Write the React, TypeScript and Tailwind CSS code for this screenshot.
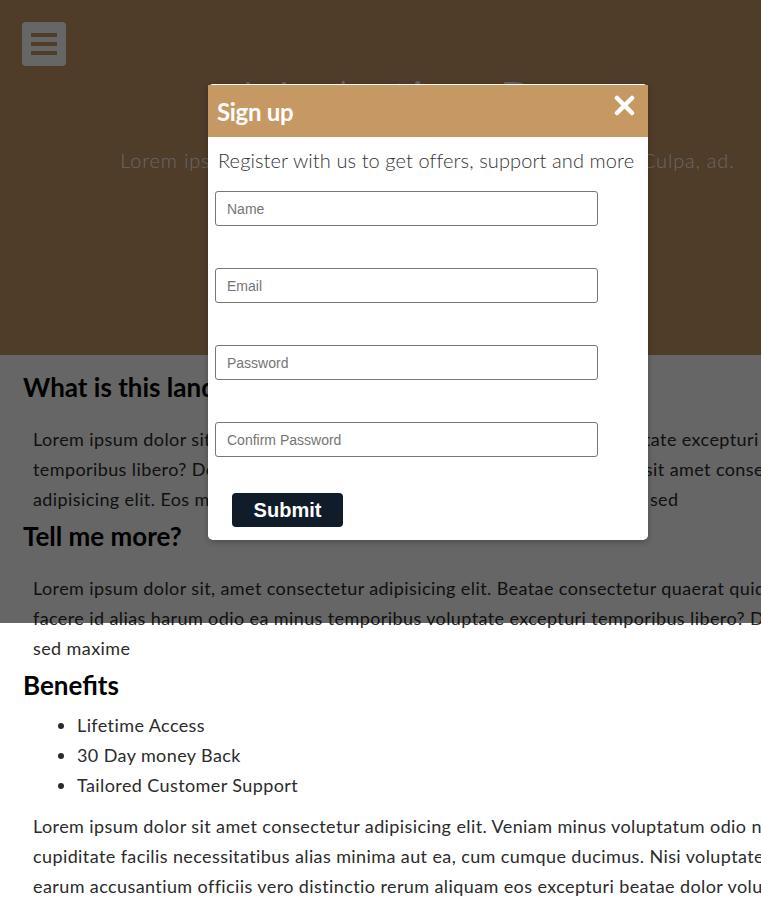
import React from 'react';

const fields = ['Name', 'Email', 'Password', 'Confirm Password'];

function Hamburger() {
  return (
    <button className="absolute left-[22px] top-[22px] flex h-[44px] w-[44px] flex-col items-center justify-center gap-[5px] rounded-[4px] bg-white">
      <span className="h-[4px] w-[26px] bg-[#c59666]" />
      <span className="h-[4px] w-[26px] bg-[#c59666]" />
      <span className="h-[4px] w-[26px] bg-[#c59666]" />
    </button>
  );
}

function SignupModal() {
  return (
    <div className="absolute left-[208px] top-[84px] flex h-[456px] w-[440px] flex-col rounded-[5px] bg-white pt-px shadow-[0_2px_6px_rgba(0,0,0,0.25)]">
      <div className="flex h-[52px] justify-between bg-[#c69863] pl-[9px] pr-[13px]">
        <span className="self-center pt-[2px] text-[24px] font-bold tracking-[-0.3px] text-white">Sign up</span>
        <svg className="mt-[10px]" width="21" height="21" viewBox="0 0 21 21">
          <path d="M3 3 L18 18 M18 3 L3 18" stroke="#fff" strokeWidth="4.5" strokeLinecap="round" />
        </svg>
      </div>
      <p className="mt-[9px] pl-[10px] text-[20px] font-light leading-[28px] tracking-[0.1px] text-[#333]">
        Register with us to get offers, support and more
      </p>
      <form className="mt-[17px] flex flex-col gap-[42px] pl-[7px]">
        {fields.map((f) => (
          <input
            key={f}
            placeholder={f}
            className="h-[35px] w-[383px] rounded-[3px] border border-[#7d766d] px-[11px] font-['Liberation_Sans',Arial,sans-serif] text-[14px] placeholder:text-[#757575]"
          />
        ))}
      </form>
      <button className="ml-[24px] mt-[36px] h-[34px] w-[111px] rounded-[4px] bg-[#111c2b] font-['Liberation_Sans',Arial,sans-serif] text-[20px] font-bold text-white">
        Submit
      </button>
    </div>
  );
}

export default function App() {
  return (
    <div className="relative w-[761px] overflow-hidden">
      <div className="relative w-[855px] bg-white pb-[40px] font-['Lato',sans-serif] text-[#2b2b2b]">
        <header className="relative h-[355px] bg-[#c59666]">
          <Hamburger />
          <div className="flex flex-col items-center pt-[66px] text-white">
            <h1 className="text-[56px] font-light leading-[67px]">Marketing Page</h1>
            <p className="mt-[13px] text-[20px] font-light leading-[28px] tracking-[0.8px]">
              Lorem ipsum dolor sit amet consectetur adipisicing elit. Culpa, ad.
            </p>
          </div>
        </header>

        <main className="px-[23px]">
          <h2 className="mt-[17px] text-[26px] font-bold leading-[31px] text-black">What is this landing page about?</h2>
          <p className="mt-[21px] whitespace-nowrap pl-[10px] text-[18px] leading-[30px] tracking-[0.4px]">
            Lorem ipsum dolor sit amet consectetur adipisicing elit. Beate minus voluptate excepturi temporibus
            <br />
            temporibus libero? Deleniti, aperiam. Quaerat, nemo at lorem ipsum dolor sit amet consectetur
            <br />
            adipisicing elit. Eos maxime quaerat, voluptate ipsa, laborum, ratione quasi sed
          </p>

          <h2 className="mt-[7px] text-[26px] font-bold leading-[31px] text-black">Tell me more?</h2>
          <p className="mt-[21px] whitespace-nowrap pl-[10px] text-[18px] leading-[30px] tracking-[0.4px]">
            Lorem ipsum dolor sit, amet consectetur adipisicing elit. Beatae consectetur quaerat quidem nemo
            <br />
            facere id alias harum odio ea minus temporibus voluptate excepturi temporibus libero? Deleniti, aperiam
            <br />
            sed maxime
          </p>

          <h2 className="mt-[7px] text-[26px] font-bold leading-[31px] text-black">Benefits</h2>
          <ul className="mt-[9px] list-disc pl-[54px] text-[18px] leading-[30px] tracking-[0.4px]">
            <li>Lifetime Access</li>
            <li>30 Day money Back</li>
            <li>Tailored Customer Support</li>
          </ul>
          <p className="mt-[11px] whitespace-nowrap pl-[10px] text-[18px] leading-[30px] tracking-[0.4px]">
            Lorem ipsum dolor sit amet consectetur adipisicing elit. Veniam minus voluptatum odio nemo
            <br />
            cupiditate facilis necessitatibus alias minima aut ea, cum cumque ducimus. Nisi voluptate
            <br />
            earum accusantium officiis vero distinctio rerum aliquam eos excepturi beatae dolor voluptas
          </p>
        </main>

        <div className="absolute left-0 top-0 h-[623px] w-full bg-black/60" />
        <SignupModal />
      </div>
    </div>
  );
}
